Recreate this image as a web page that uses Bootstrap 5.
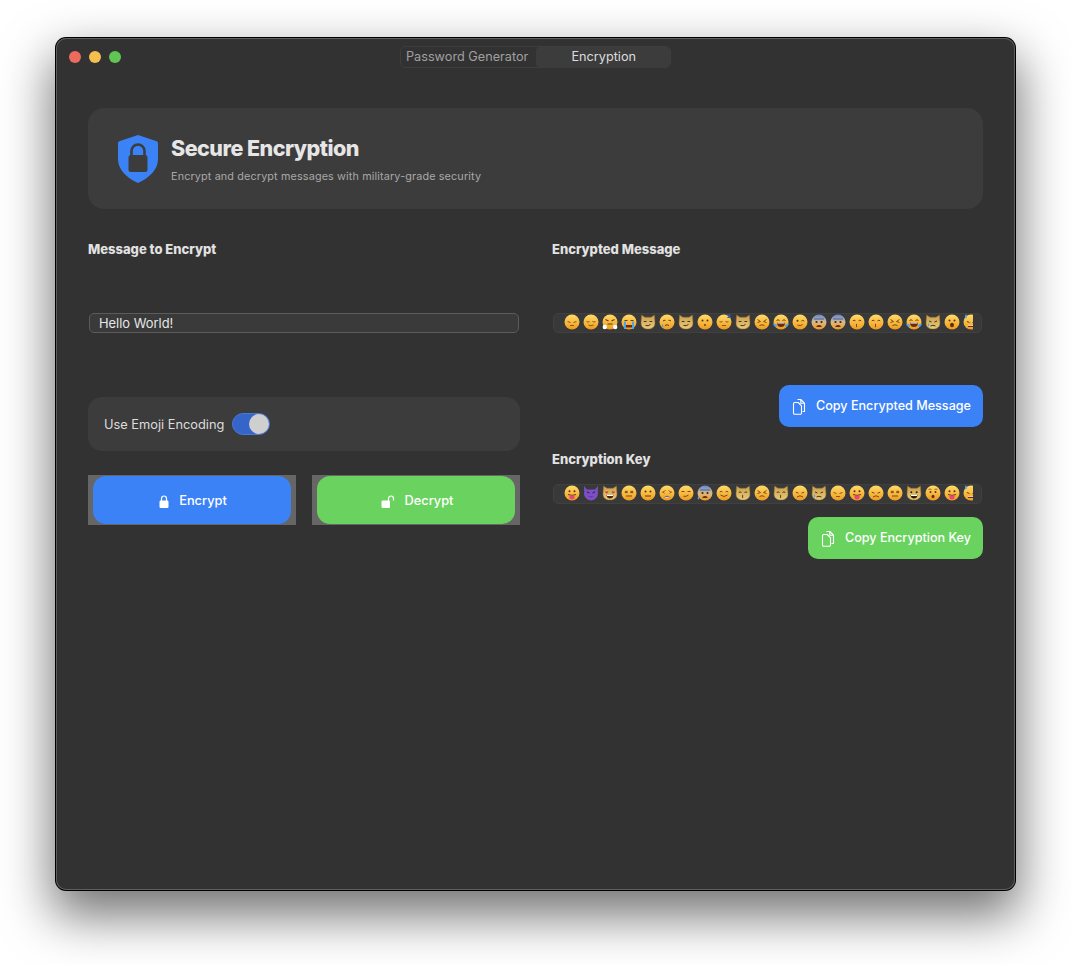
<!DOCTYPE html>
<html lang="en">
<head>
  <meta charset="UTF-8" />
  <title>Secure Encryption</title>
  <link href="https://cdn.jsdelivr.net/npm/bootstrap@5.3.2/dist/css/bootstrap.min.css" rel="stylesheet"/>
  <style>
    html, body { height: 100%; }
    body {
      background: #fff;
      font-family: Inter, "Liberation Sans", sans-serif;
      padding: 38px 56px 74px 56px;
      overflow: hidden;
    }
    .app-window {
      height: 852px;
      background: #323232;
      border-radius: 10px;
      box-shadow: 0 0 0 1px #000, inset 0 0 0 1px #5e5e5e, 0 22px 50px 4px rgba(0,0,0,.55);
      color: #e4e4e4;
    }
    .title-bar { height: 38px; position: relative; }
    .traffic-group { padding: 13px 0 0 13px; }
    .traffic { width: 12px; height: 12px; border-radius: 50%; }
    .tl-red { background: #ec6a5e; }
    .tl-amber { background: #f4bf4f; }
    .tl-green { background: #61c554; }
    .segments {
      margin-top: 8px;
      height: 22px;
      width: 271px;
      border: 1px solid #3d3d3d;
      border-radius: 5px;
      font-size: 12.7px;
      color: #a0a0a0;
    }
    .seg-off { width: 135px; padding-left: 5px; line-height: 20px; white-space: nowrap; }
    .seg-on { width: 135px; background: #3c3c3c; color: #dcdcdc; text-align: center; line-height: 20px; border-radius: 4px; padding-left: 2px; }
    .main-area { padding: 32px 32px 0 32px; }
    .hero {
      height: 101px;
      background: #3c3c3c;
      border-radius: 16px;
      padding-left: 30px;
      margin-bottom: 32px;
    }
    .hero-shield { margin-right: 13px; }
    .hero-text { padding-top: 2px; }
    .hero h1 { font-size: 21.5px; font-weight: 800; letter-spacing: -.52px; color: #e6e6e6; margin: 0 0 9px; line-height: 26px; }
    .hero p { font-size: 10.8px; color: #a8a8a8; margin: 0; line-height: 14px; letter-spacing: .14px; }
    .two-cols { display: grid; grid-template-columns: 432px 431px; column-gap: 32px; }
    .sec-label { font-size: 13px; font-weight: 800; color: #e2e2e2; line-height: 16px; margin: 0; }
    .msg-input, .msg-input:focus {
      width: 430px;
      height: 20px;
      padding: 0 9px;
      margin: 56px 0 0 1px;
      font-size: 12.9px;
      line-height: 18px;
      color: #e6e6e6;
      background: #3a3a3a;
      border: 1px solid #5c5c5c;
      border-radius: 5px;
      box-shadow: none;
    }
    .toggle-box {
      height: 54px;
      margin-top: 64px;
      padding-left: 16px;
      background: #3c3c3c;
      border-radius: 14px;
      font-size: 12.8px;
      color: #dcdcdc;
    }
    .toggle-text { padding-top: 2px; }
    .toggle-track {
      width: 38px; height: 22px; margin-left: 8px;
      border-radius: 11px;
      background: #3565c8;
      border: 1px solid #4a78d6;
      position: relative;
    }
    .toggle-knob {
      position: absolute; right: 0; top: 0;
      width: 20px; height: 20px; border-radius: 50%;
      background: #cfcfcf;
    }
    .action-row { margin-top: 24px; display: grid; grid-template-columns: 208px 208px; column-gap: 16px; }
    .action-wrap { height: 50px; background: #666; padding: 1px 5px; }
    .action-btn {
      width: 100%; height: 48px;
      padding: 2px 0 0 2px;
      border: 0; border-radius: 13px;
      color: #fff; font-size: 12.8px; font-weight: 500;
      gap: 10px;
    }
    .bg-blue, .bg-blue:hover { background: #3b82f6; color: #fff; }
    .bg-green, .bg-green:hover { background: #6ad35f; color: #fff; }
    .emoji-field {
      height: 20px;
      margin: 56px 1px 0;
      padding: 0 8px 0 10px;
      background: #393939;
      border: 1px solid #404040;
      border-radius: 5px;
      overflow: hidden;
    }
    .emoji-key { margin-top: 17px; }
    .emoji-strip { display: flex; gap: 3px; width: 100%; overflow: hidden; }
    .emoji-strip svg { width: 16px; height: 16px; flex: 0 0 16px; }
    .copy-row-msg { margin-top: 52px; }
    .copy-row-key { margin-top: 13px; }
    .copy-btn {
      height: 42px;
      border: 0; border-radius: 10px;
      padding: 1px 12px 0 13px;
      font-size: 12.6px; font-weight: 500;
      gap: 8px;
    }
    .key-label { margin-top: 24px; }
  </style>
</head>
<body>

<!-- emoji drawings -->
<svg width="0" height="0" class="position-absolute">
  <defs>
    <linearGradient id="gFace" x1="0" y1="0" x2="0" y2="1"><stop offset="0" stop-color="#ffdc6a"/><stop offset="1" stop-color="#ef9a1e"/></linearGradient>
    <linearGradient id="gCat" x1="0" y1="0" x2="0" y2="1"><stop offset="0" stop-color="#c9a04e"/><stop offset="1" stop-color="#e9c979"/></linearGradient>
    <linearGradient id="gFear" x1="0" y1="0" x2="0" y2="1"><stop offset="0" stop-color="#5f88d6"/><stop offset=".5" stop-color="#d9b98a"/><stop offset="1" stop-color="#ef9a1e"/></linearGradient>
    <symbol id="face" viewBox="0 0 16 16"><circle cx="8" cy="8" r="7.5" fill="url(#gFace)"/></symbol>
    <symbol id="catbase" viewBox="0 0 16 16"><path d="M1.5 1l3.5 2.2h6L14.500 1l.5 8c0 4-3 6-7 6s-7-2-7-6z" fill="url(#gCat)" stroke="#8a6a2a" stroke-width=".5"/></symbol>
    <symbol id="pensive" viewBox="0 0 16 16"><use href="#face"/><path d="M3.500 7.500l3 1M12.500 7.500l-3 1M6 11.500h4" stroke="#8a5a12" stroke-width="1" fill="none"/></symbol>
    <symbol id="relieved" viewBox="0 0 16 16"><use href="#face"/><path d="M3.500 7.500q1.500 1.200 3 0M9.500 7.500q1.500 1.200 3 0M5.500 11q2.500 1.500 5 0" stroke="#8a5a12" stroke-width="1" fill="none"/></symbol>
    <symbol id="triumph" viewBox="0 0 16 16"><use href="#face"/><path d="M3.500 5.500l3 1.500M12.500 5.500l-3 1.500M5.500 10h5" stroke="#6a3a08" stroke-width="1.100" fill="none"/><circle cx="2.800" cy="13" r="2.200" fill="#fff"/><circle cx="13.200" cy="13" r="2.200" fill="#fff"/></symbol>
    <symbol id="sob" viewBox="0 0 16 16"><use href="#face"/><path d="M3.500 6.500h3M9.500 6.500h3" stroke="#6a3a08" stroke-width="1"/><path d="M5 11h6v2.500H5z" fill="#6a2a10"/><path d="M3 7.500h2V15H3zM11 7.500h2V15h-2z" fill="#4aa4ee"/></symbol>
    <symbol id="catsmirk" viewBox="0 0 16 16"><use href="#catbase"/><path d="M3.800 7.500h2.700M9.500 7.500h2.700M5.500 11.500q3 .8 5-1" stroke="#4a3410" stroke-width="1" fill="none"/></symbol>
    <symbol id="cry" viewBox="0 0 16 16"><use href="#face"/><path d="M4 7q1-1 2.500-.6M9.500 6.400q1.500-.4 2.500.6M6 11.500q2-1.500 4 0" stroke="#6a3a08" stroke-width="1" fill="none"/><path d="M3.500 10q-1.800 2.500 0 3.500q1.800-1 0-3.500z" fill="#4aa4ee"/></symbol>
    <symbol id="hush" viewBox="0 0 16 16"><use href="#face"/><circle cx="5.500" cy="6.500" r="1" fill="#5a3208"/><circle cx="10.500" cy="6.500" r="1" fill="#5a3208"/><circle cx="8" cy="11" r="1" fill="#7a3a10"/></symbol>
    <symbol id="sleepy" viewBox="0 0 16 16"><use href="#face"/><path d="M3.500 7.500q1.500 1.200 3 0M9.500 7.500q1.500 1.200 3 0M6 11.500h4" stroke="#8a5a12" stroke-width="1" fill="none"/><path d="M10.500 1h4l-3 2.500h3.500" stroke="#3d62b8" stroke-width="1" fill="none"/></symbol>
    <symbol id="persevere" viewBox="0 0 16 16"><use href="#face"/><path d="M3.500 5.500l3 2-3 1M12.500 5.500l-3 2 3 1M5.500 11.500q2.500-1.500 5 0" stroke="#7a4a10" stroke-width="1" fill="none"/></symbol>
    <symbol id="joy" viewBox="0 0 16 16"><use href="#face"/><path d="M3.500 6.500q1.500-1.500 3 0M9.500 6.500q1.500-1.500 3 0" stroke="#6a3a08" stroke-width="1" fill="none"/><path d="M4 8.500h8q0 4.500-4 4.500t-4-4.500z" fill="#6a2a10"/><path d="M4.500 8.500h7v1h-7z" fill="#fff"/><path d="M0 9.500l3.500 1 .5 2.500q-3 .5-4-3.500zM16 9.500l-3.500 1-.5 2.500q3 .5 4-3.500z" fill="#4aa4ee"/></symbol>
    <symbol id="wink" viewBox="0 0 16 16"><use href="#face"/><circle cx="5.500" cy="6.800" r="1" fill="#5a3208"/><path d="M9.300 7q1.500-1 3 0M5.500 11q3 1.500 5-.5" stroke="#7a4a10" stroke-width="1" fill="none"/></symbol>
    <symbol id="fear" viewBox="0 0 16 16"><circle cx="8" cy="8" r="7.500" fill="url(#gFear)"/><circle cx="5.500" cy="8" r="1.100" fill="#3a2808"/><circle cx="10.500" cy="8" r="1.100" fill="#3a2808"/><path d="M5.500 12q2.500-2 5 0v1h-5z" fill="#6a2a10"/><path d="M3 5h10" stroke="#2f4f9a" stroke-width=".8"/></symbol>
    <symbol id="kiss" viewBox="0 0 16 16"><use href="#face"/><path d="M3.800 6.800q1.300-1.200 2.700 0M9.500 6.800q1.300-1.200 2.700 0M7 10q2 .8 0 1.500q2 .8 0 1.500" stroke="#7a3a10" stroke-width="1" fill="none"/></symbol>
    <symbol id="catcry" viewBox="0 0 16 16"><use href="#catbase"/><path d="M4 7l2.500 1M12 7l-2.500 1M5.500 12q2.500-1.500 5 0" stroke="#4a3410" stroke-width="1" fill="none"/><path d="M3.500 9q-1.500 2.500 0 3.500q1.500-1 0-3.500z" fill="#4aa4ee"/></symbol>
    <symbol id="wow" viewBox="0 0 16 16"><use href="#face"/><circle cx="5.500" cy="6.500" r="1" fill="#5a3208"/><circle cx="10.500" cy="6.500" r="1" fill="#5a3208"/><ellipse cx="8" cy="11" rx="2" ry="2.300" fill="#6a2a10"/></symbol>
    <symbol id="sweat" viewBox="0 0 16 16"><use href="#face"/><path d="M3.800 7.500l2.700 1M12.200 7.500l-2.700 1" stroke="#6a3a08" stroke-width="1"/><path d="M5 11h6v2H5z" fill="#6a2a10"/><path d="M5 11h6v.8H5z" fill="#fff"/><path d="M3 0q-2 3 0 4.500q2-1.500 0-4.500z" fill="#5ab0ef"/></symbol>
    <symbol id="coldsweat" viewBox="0 0 16 16"><use href="#fear"/><path d="M1.500 11q-1.500 2.500 0 3.500q1.500-1 0-3.500z" fill="#5ab0ef"/></symbol>
    <symbol id="tongue" viewBox="0 0 16 16"><use href="#face"/><circle cx="5.500" cy="6.300" r="1" fill="#5a3208"/><circle cx="10.500" cy="6.300" r="1" fill="#5a3208"/><path d="M4 9.500q4 1.800 8 0" stroke="#6a3a08" stroke-width="1" fill="none"/><path d="M5.500 10.500h5V13q-2.500 3-5 0z" fill="#e8457e"/></symbol>
    <symbol id="devil" viewBox="0 0 16 16"><path d="M1 1l3 3.500h8L15 1l-.2 6A7 7 0 0 1 8 15.500 7 7 0 0 1 1.200 7z" fill="#7d4fc4"/><path d="M3.800 6.800l2.700 1.200M12.200 6.800l-2.700 1.200" stroke="#2f1a5a" stroke-width="1"/><path d="M4.500 10.500q3.500 2.500 7 0q-3.500 3.500-7 0z" fill="#2f1a5a"/></symbol>
    <symbol id="heartcat" viewBox="0 0 16 16"><use href="#catbase"/><path d="M3 7q.8-1.300 1.800-.3q1-1 1.700.3l-1.700 1.800zM9.500 7q.8-1.300 1.700-.3q1-1 1.800.3l-1.800 1.800z" fill="#e53340"/><path d="M4.500 10h7q-.5 3.500-3.500 3.500T4.500 10z" fill="#4a2410"/><path d="M5 10h6v1H5z" fill="#fff"/></symbol>
    <symbol id="blank" viewBox="0 0 16 16"><use href="#face"/><path d="M3.800 6.300h2.900M9.300 6.300h2.900M3.800 7.600h2.900M9.300 7.600h2.900M5 11h6" stroke="#7a4a10" stroke-width="1"/></symbol>
    <symbol id="neutral" viewBox="0 0 16 16"><use href="#face"/><circle cx="5.500" cy="6.500" r="1" fill="#5a3208"/><circle cx="10.500" cy="6.500" r="1" fill="#5a3208"/><path d="M5 11h6" stroke="#6a3a08" stroke-width="1"/></symbol>
    <symbol id="weary" viewBox="0 0 16 16"><use href="#face"/><path d="M3.500 7.500l3-2M12.500 7.500l-3-2M3.500 6.500l2 2M12.500 6.500l-2 2" stroke="#7a4a10" stroke-width=".8" fill="none"/><path d="M4.500 13q3.500-4.500 7 0z" fill="#6a2a10"/><path d="M5.500 11.800h5v1h-5z" fill="#fff"/></symbol>
    <symbol id="smirk" viewBox="0 0 16 16"><use href="#face"/><path d="M3.500 6.500h3M9.500 6.500h3M5.500 11.300q3 .6 5-1.300" stroke="#7a4a10" stroke-width="1" fill="none"/></symbol>
    <symbol id="smile" viewBox="0 0 16 16"><use href="#face"/><path d="M3.800 7q1.300-1.300 2.700 0M9.500 7q1.300-1.300 2.700 0M4.500 10q3.500 3 7 0" stroke="#7a4a10" stroke-width="1" fill="none"/></symbol>
    <symbol id="catkiss" viewBox="0 0 16 16"><use href="#catbase"/><path d="M3.800 7.500q1.300-1.200 2.700 0M9.500 7.500q1.300-1.200 2.700 0M7.200 10q1.800.8 0 1.400q1.800.8 0 1.400" stroke="#4a3410" stroke-width="1" fill="none"/></symbol>
    <symbol id="sad" viewBox="0 0 16 16"><use href="#face"/><path d="M3.800 7.200l2.700 1M12.200 7.200l-2.700 1M5 12q3-2.500 6 0" stroke="#7a4a10" stroke-width="1" fill="none"/></symbol>
    <symbol id="catsmile" viewBox="0 0 16 16"><use href="#catbase"/><circle cx="5.300" cy="7.300" r="1" fill="#2c1e08"/><circle cx="10.700" cy="7.300" r="1" fill="#2c1e08"/><path d="M4.500 10h7q-.5 3.500-3.500 3.500T4.500 10z" fill="#2c1e08"/><path d="M5 10h6v1H5z" fill="#fff"/></symbol>
    <symbol id="hushed" viewBox="0 0 16 16"><use href="#face"/><path d="M3.500 4.500q1.500-1 3 0M9.500 4.500q1.500-1 3 0" stroke="#7a4a10" stroke-width=".8" fill="none"/><circle cx="5.500" cy="7" r="1" fill="#5a3208"/><circle cx="10.500" cy="7" r="1" fill="#5a3208"/><ellipse cx="8" cy="11.500" rx="1.500" ry="1.800" fill="#6a2a10"/></symbol>
    <symbol id="icon-copy" viewBox="0 0 16 18">
      <path d="M5.500 1.500h3.300l3.700 3.700v8.300h-2M8.800 1.500v3.700h3.700" fill="none" stroke="currentColor" stroke-width="1.100" stroke-linejoin="round"/>
      <path d="M2.800 4.500h3.400l3.300 3.300v7.200a1.300 1.300 0 0 1-1.300 1.300H2.800A1.300 1.300 0 0 1 1.500 15V5.800a1.300 1.300 0 0 1 1.300-1.300z" fill="none" stroke="currentColor" stroke-width="1.100" stroke-linejoin="round"/>
    </symbol>
  </defs>
</svg>

<div class="app-window d-flex flex-column">
  <!-- Title bar -->
  <div class="title-bar d-flex justify-content-center">
    <div class="traffic-group d-flex gap-2 position-absolute top-0 start-0">
      <span class="traffic tl-red"></span>
      <span class="traffic tl-amber"></span>
      <span class="traffic tl-green"></span>
    </div>
    <div class="segments d-flex">
      <div class="seg-off">Password Generator</div>
      <div class="seg-on">Encryption</div>
    </div>
  </div>

  <!-- Main -->
  <div class="main-area">
    <div class="hero d-flex align-items-center">
      <svg class="hero-shield flex-shrink-0" width="40" height="48" viewBox="0 0 40 48">
        <path d="M20 0L38 6c1 .3 2 1 2 2.500V24c0 11-9 19-20 24C9 43 0 35 0 24V8.500C0 7 1 6.300 2 6z" fill="#3b82f6"/>
        <path d="M13.500 21v-5a6.500 6.500 0 0 1 13 0v5" fill="none" stroke="#3c3c3c" stroke-width="2.600"/>
        <rect x="10.500" y="20" width="19" height="17" rx="2.500" fill="#3c3c3c"/>
      </svg>
      <div class="hero-text">
        <h1>Secure Encryption</h1>
        <p>Encrypt and decrypt messages with military-grade security</p>
      </div>
    </div>

    <div class="two-cols">
      <!-- Left column -->
      <div>
        <p class="sec-label">Message to Encrypt</p>
        <input type="text" class="form-control msg-input" value="Hello World!">
        <div class="toggle-box d-flex align-items-center">
          <span class="toggle-text">Use Emoji Encoding</span>
          <span class="toggle-track"><span class="toggle-knob"></span></span>
        </div>
        <div class="action-row">
          <div class="action-wrap">
            <button type="button" class="btn action-btn bg-blue d-flex align-items-center justify-content-center">
              <svg width="10" height="13" viewBox="0 0 10 13"><path d="M2.500 6V3.500a2.500 2.500 0 0 1 5 0V6" fill="none" stroke="#fff" stroke-width="1.200"/><rect x=".5" y="5.500" width="9" height="7.500" rx="1.200" fill="#fff"/></svg>
              Encrypt
            </button>
          </div>
          <div class="action-wrap">
            <button type="button" class="btn action-btn bg-green d-flex align-items-center justify-content-center">
              <svg width="14" height="13" viewBox="0 0 14 13"><path d="M7.500 6V3.500a2.500 2.500 0 0 1 5 0V5.500" fill="none" stroke="#fff" stroke-width="1.200"/><rect x=".5" y="5.500" width="8.500" height="7.500" rx="1.200" fill="#fff"/></svg>
              Decrypt
            </button>
          </div>
        </div>
      </div>

      <!-- Right column -->
      <div>
        <p class="sec-label">Encrypted Message</p>
        <div class="emoji-field"><div class="emoji-strip" id="msgEmoji"></div></div>
        <div class="copy-row-msg d-flex justify-content-end">
          <button type="button" class="btn copy-btn bg-blue d-flex align-items-center">
            <svg width="16" height="18"><use href="#icon-copy"/></svg>
            Copy Encrypted Message
          </button>
        </div>
        <p class="sec-label key-label">Encryption Key</p>
        <div class="emoji-field emoji-key"><div class="emoji-strip" id="keyEmoji"></div></div>
        <div class="copy-row-key d-flex justify-content-end">
          <button type="button" class="btn copy-btn bg-green d-flex align-items-center">
            <svg width="16" height="18"><use href="#icon-copy"/></svg>
            Copy Encryption Key
          </button>
        </div>
      </div>
    </div>
  </div>
</div>

<script>
  const msgEmoji = "pensive relieved triumph sob catsmirk cry catsmirk hush sleepy catsmirk persevere joy wink fear fear kiss kiss persevere joy catcry wow sweat".split(" ");
  const keyEmoji = "tongue devil heartcat blank neutral weary smirk coldsweat smile catkiss persevere catkiss sad catcry pensive tongue sad blank catsmile hushed tongue sweat".split(" ");
  function fillStrip(id, names) {
    document.getElementById(id).innerHTML = names.map(n => `<svg viewBox="0 0 16 16"><use href="#${n}"/></svg>`).join("");
  }
  fillStrip("msgEmoji", msgEmoji);
  fillStrip("keyEmoji", keyEmoji);
</script>
<script src="https://cdn.jsdelivr.net/npm/bootstrap@5.3.2/dist/js/bootstrap.bundle.min.js"></script>
</body>
</html>
